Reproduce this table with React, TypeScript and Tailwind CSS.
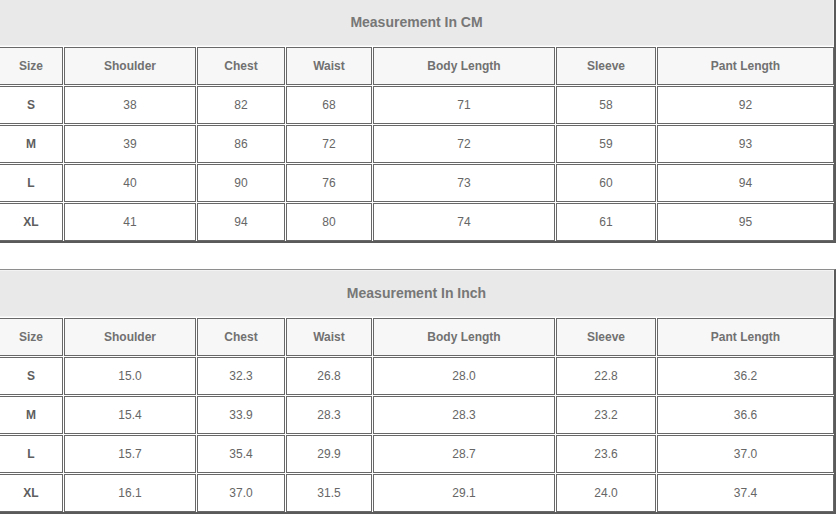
import React from 'react';

const headers = ['Size', 'Shoulder', 'Chest', 'Waist', 'Body Length', 'Sleeve', 'Pant Length'];

const cmRows = [
  ['S', '38', '82', '68', '71', '58', '92'],
  ['M', '39', '86', '72', '72', '59', '93'],
  ['L', '40', '90', '76', '73', '60', '94'],
  ['XL', '41', '94', '80', '74', '61', '95'],
];

const inchRows = [
  ['S', '15.0', '32.3', '26.8', '28.0', '22.8', '36.2'],
  ['M', '15.4', '33.9', '28.3', '28.3', '23.2', '36.6'],
  ['L', '15.7', '35.4', '29.9', '28.7', '23.6', '37.0'],
  ['XL', '16.1', '37.0', '31.5', '29.1', '24.0', '37.4'],
];

const cols = 'grid grid-cols-[64px_132px_88px_86px_182px_100px_177px] gap-[1px]';

const SizeTable: React.FC<{ title: string; rows: string[][]; className?: string }> = ({ title, rows, className }) => (
  <div
    className={`ml-[-3px] w-[839px] border-t border-t-[#8e8e8e] border-l-2 border-l-[#9a9a9a] border-r-2 border-r-[#5a5a5a] border-b-2 border-b-[#5a5a5a] flex flex-col gap-[1px] ${className ?? ''}`}
  >
    <div className="h-[47px] bg-[#e9e9e9] border border-[#f3f3f3] flex items-center justify-center text-[14px] font-bold text-[#777]">
      {title}
    </div>
    <div className={cols}>
      {headers.map((h) => (
        <div
          key={h}
          className="h-[38px] bg-[#f7f7f7] border border-[#686868] flex items-center justify-center text-[12px] font-bold text-[#717171]"
        >
          {h}
        </div>
      ))}
    </div>
    {rows.map((row) => (
      <div key={row[0]} className={cols}>
        {row.map((v, i) => (
          <div
            key={i}
            className={`h-[38px] bg-white border border-[#686868] flex items-center justify-center text-[12px] ${
              i === 0 ? 'font-bold text-[#5e5e5e]' : 'text-[#666]'
            }`}
          >
            {v}
          </div>
        ))}
      </div>
    ))}
  </div>
);

export default function App() {
  return (
    <div className="w-[837px] h-[514px] overflow-hidden bg-white font-['Liberation_Sans',Arial,sans-serif]">
      <SizeTable title="Measurement In CM" rows={cmRows} className="mt-[-2px]" />
      <SizeTable title="Measurement In Inch" rows={inchRows} className="mt-[26px]" />
    </div>
  );
}
